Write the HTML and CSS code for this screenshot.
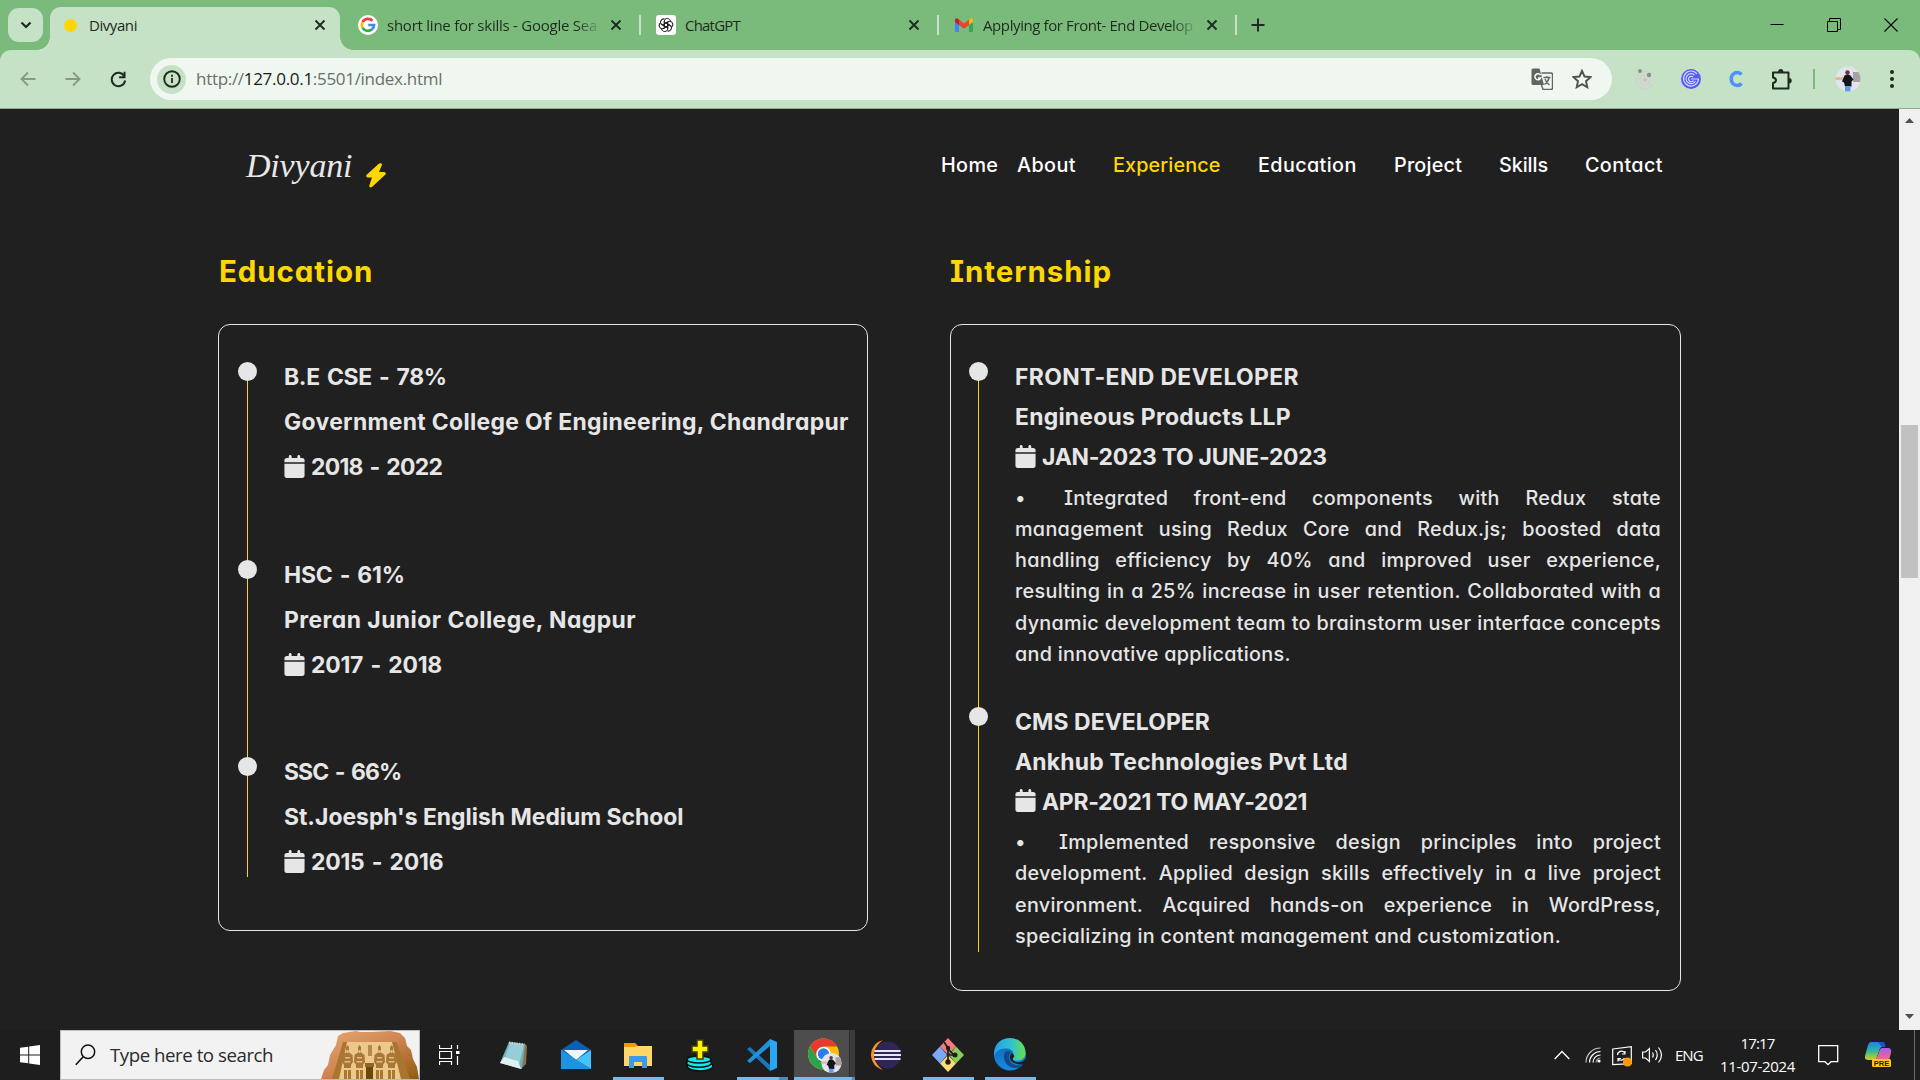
FILE: index.html
```
<!DOCTYPE html>
<html lang="en">
<head>
<meta charset="utf-8">
<title>Divyani</title>
<link rel="stylesheet" href="styles.css">
</head>
<body>
<svg class="defs" aria-hidden="true">
  <symbol id="close" viewBox="0 0 12 12"><path d="M1.5 1.5l9 9M10.5 1.5l-9 9" stroke="#1f2a20" stroke-width="1.9" fill="none"/></symbol>
  <symbol id="calendar" viewBox="0 0 448 512"><path fill="#e6e6e6" d="M96 32V64H48C21.500 64 0 85.500 0 112v48H448V112c0-26.500-21.500-48-48-48H352V32c0-17.700-14.300-32-32-32s-32 14.300-32 32V64H160V32c0-17.700-14.300-32-32-32S96 14.300 96 32zM448 192H0V464c0 26.500 21.500 48 48 48H400c26.500 0 48-21.500 48-48V192z"/></symbol>
  <symbol id="avatar" viewBox="0 0 26 26">
    <clipPath id="round"><circle cx="13" cy="13" r="12.500"/></clipPath>
    <g clip-path="url(#round)"><rect width="26" height="26" fill="#e3e3f0"/><path d="M0 11h10v3H0z" fill="#d9bf98"/><path d="M18 6h8v10h-8z" fill="#a9a0a6"/><circle cx="12.500" cy="6.500" r="2.200" fill="#5a3a33"/><path d="M9.500 9.500q3-2 6 0l3 4-2 2v5H10l-1-4-2-1z" fill="#12131c"/><path d="M10 20h5.500v6H10z" fill="#5f9bea"/></g>
  </symbol>
</svg>

<div class="screen">
  <header class="tabstrip">
    <div class="tab-search"><svg width="12" height="8" viewBox="0 0 12 8"><path d="M1.500 1.500L6 6l4.500-4.500" fill="none" stroke="#1f2a20" stroke-width="2.200"/></svg></div>
    <div class="tab active">
      <span class="fav"><i class="yellow-dot"></i></span><span class="tab-title t1">Divyani</span><svg class="x"><use href="#close"/></svg>
    </div>
    <div class="tab">
      <span class="fav"><svg width="20" height="20" viewBox="0 0 20 20"><circle cx="10" cy="10" r="10" fill="#fff"/><g fill="none" stroke-width="2.700"><path d="M14.500 5.800A6.200 6.200 0 0 0 4.600 7.100" stroke="#ea4335"/><path d="M4.600 7.100a6.300 6.300 0 0 0 0 5.800" stroke="#fbbc05"/><path d="M4.600 12.900a6.200 6.200 0 0 0 9.300 1.500" stroke="#34a853"/><path d="M13.900 14.400A6 6 0 0 0 16.100 10H10.300" stroke="#4285f4"/></g></svg></span><span class="tab-title fade t2">short line for skills - Google Sea</span><svg class="x"><use href="#close"/></svg>
    </div>
    <div class="tab">
      <span class="fav"><svg width="20" height="20" viewBox="0 0 20 20"><rect width="20" height="20" rx="3" fill="#fff"/><g fill="none" stroke="#222" stroke-width="1"><path id="petal" d="M8.300 12.700V6.500c0-4 5.500-4 6.200-.5M8.300 9l4.500-2.600"/><use href="#petal" transform="rotate(60 10 10)"/><use href="#petal" transform="rotate(120 10 10)"/><use href="#petal" transform="rotate(180 10 10)"/><use href="#petal" transform="rotate(240 10 10)"/><use href="#petal" transform="rotate(300 10 10)"/></g></svg></span><span class="tab-title t3">ChatGPT</span><svg class="x"><use href="#close"/></svg>
    </div>
    <div class="tab">
      <span class="fav"><svg width="18" height="14" viewBox="0 0 18 14"><path d="M0 2v11q0 1 1 1h3V5z" fill="#4285f4"/><path d="M18 2v11q0 1-1 1h-3V5z" fill="#34a853"/><path d="M14 1.500l2-1.200q2-.6 2 2V4l-4 3z" fill="#fbbc04"/><path d="M4 1.500L2 .3Q0-.3 0 2.300V4l4 3z" fill="#c5221f"/><path d="M4 1.500l5 4 5-4V7l-5 3.800L4 7z" fill="#ea4335"/></svg></span><span class="tab-title fade t4">Applying for Front- End Develop</span><svg class="x"><use href="#close"/></svg>
    </div>
    <svg class="plus" width="14" height="14" viewBox="0 0 14 14"><path d="M7 .5v13M.5 7h13" stroke="#1f2a20" stroke-width="2"/></svg>
    <div class="window-buttons">
      <svg width="14" height="14" viewBox="0 0 14 14"><path d="M.5 6.500h13" stroke="#000"/></svg>
      <svg width="14" height="14" viewBox="0 0 14 14"><path d="M.5 3.500h10v10H.5zM2.500 3V.5h11v11H11" fill="none" stroke="#000"/></svg>
      <svg width="14" height="14" viewBox="0 0 14 14"><path d="M.5.5l13 13M13.500.5l-13 13" stroke="#000" stroke-width="1.100"/></svg>
    </div>
  </header>

  <div class="toolbar">
    <div class="nav-buttons">
      <svg width="16" height="16" viewBox="0 0 16 16"><path d="M15.500 8H1.500M8 1.500L1.500 8 8 14.500" fill="none" stroke="#869a87" stroke-width="1.900"/></svg>
      <svg width="16" height="16" viewBox="0 0 16 16"><path d="M.5 8h14M8 1.500L14.500 8 8 14.500" fill="none" stroke="#869a87" stroke-width="1.900"/></svg>
      <svg width="17" height="17" viewBox="0 0 17 17"><path d="M14.300 5.200A6.700 6.700 0 1 0 15.100 9.500" fill="none" stroke="#1f2a20" stroke-width="2"/><path d="M15.500.8v6.400H9.100V5.300h4.500V.8z" fill="#1f2a20"/></svg>
    </div>
    <div class="omnibox">
      <span class="info"><svg width="18" height="18" viewBox="0 0 18 18"><circle cx="9" cy="9" r="7.800" fill="none" stroke="#1f2a20" stroke-width="1.900"/><path d="M9 8v5M9 4.800v1.900" stroke="#1f2a20" stroke-width="1.800"/></svg></span>
      <span class="url">http://<b>127.0.0.1</b>:5501/index.html</span>
      <svg width="22" height="22" viewBox="0 0 22 22"><path d="M2 .5h6.500L13 17H2Q.5 17 .5 15.500V2Q.5.500 2 .5z" fill="#5f6661"/><path d="M9.500 7.200A3 3 0 1 0 9.700 10H7" fill="none" stroke="#fff" stroke-width="1.500"/><path d="M10.500 5H20q1.500 0 1.500 1.500V20q0 1.500-1.500 1.500h-8L10.500 17" fill="none" stroke="#5f6661" stroke-width="1.400"/><path d="M12.500 9.500h7M16 8v1.500M18.200 9.500q-1 4.500-4.700 7M14 11q1 3.500 4.500 6" fill="none" stroke="#5f6661" stroke-width="1.300"/></svg>
      <svg class="star" width="20" height="20" viewBox="0 0 20 20"><path d="M10 1.800l2.500 5.700 6 .6-4.500 4.100 1.300 6L10 15.100l-5.300 3.100 1.300-6L1.500 8.100l6-.6z" fill="none" stroke="#4c534d" stroke-width="1.900"/></svg>
    </div>
    <div class="extensions">
      <svg width="22" height="22" viewBox="0 0 22 22"><g fill="none" stroke="#d3cfd0" stroke-width="1.500"><circle cx="11" cy="12" r="8.800" stroke-dasharray="44 12" stroke-dashoffset="-4"/><circle cx="11" cy="12" r="5"/></g><circle cx="11" cy="12" r="2" fill="#dcb6d0"/><circle cx="6" cy="3" r="2" fill="#8b8f8c"/><circle cx="15" cy="7" r="2.200" fill="#8b8f8c"/></svg>
      <svg width="20" height="20" viewBox="0 0 20 20"><circle cx="10" cy="10" r="10" fill="#525cf5"/><g fill="none" stroke="#d5d8ff" stroke-width="1.200"><path d="M16 5A7.500 7.500 0 1 0 17.500 10H10M13.500 6A5 5 0 1 0 14.500 12"/><path d="M12 8a2.700 2.700 0 1 0 .5 3.500"/></g></svg>
      <svg width="16" height="20" viewBox="0 0 16 20"><path d="M13.500 5.500A6 6.500 0 1 0 13.500 14.500" fill="none" stroke="#4b93fb" stroke-width="3.600"/></svg>
      <svg width="22" height="23" viewBox="0 0 22 23"><path d="M2 4.500h15.500v16H2V15q3-.5 3-2.700T2 9.500z" fill="none" stroke="#1f2a20" stroke-width="2" stroke-linejoin="round"/><path d="M7 4a2.700 3 0 0 1 5.400 0zM18 10a2.700 2.700 0 0 1 0 5.400z" fill="#1f2a20"/></svg>
    </div>
    <i class="bar"></i>
    <svg class="profile"><use href="#avatar"/></svg>
    <svg class="kebab" width="4" height="20" viewBox="0 0 4 20"><g fill="#1f2a20"><circle cx="2" cy="3" r="2"/><circle cx="2" cy="10" r="2"/><circle cx="2" cy="17" r="2"/></g></svg>
  </div>

  <div class="viewport">
    <div class="page">
      <nav class="site-nav">
        <div class="logo"><span class="signature">Divyani</span><svg width="20" height="25" viewBox="0 0 20 25"><path d="M14.500.3q2 .2 1.300 2L13 9h5.200q2.600.8 1 2.800L6.200 23.800q-2.700 1.600-3-.8L6 14.500H1.500q-2.200-.7-.8-2.800L12.800.8q.8-.6 1.700-.5z" fill="#ffd700"/></svg></div>
        <a class="n-home">Home</a><a class="n-about">About</a><a class="n-exp">Experience</a><a class="n-edu">Education</a><a class="n-proj">Project</a><a class="n-skills">Skills</a><a class="n-contact">Contact</a>
      </nav>
      <main class="columns">
        <section class="education">
          <h2 class="h-edu">Education</h2>
          <ul class="card">
            <li><h3 class="e1">B.E CSE - 78%</h3><h3 class="e2">Government College Of Engineering, Chandrapur</h3><h3 class="date"><svg><use href="#calendar"/></svg>2018 - 2022</h3></li>
            <li><h3 class="e3">HSC - 61%</h3><h3 class="e4">Preran Junior College, Nagpur</h3><h3 class="date d2"><svg><use href="#calendar"/></svg>2017 - 2018</h3></li>
            <li><h3 class="e5">SSC - 66%</h3><h3 class="e6">St.Joesph's English Medium School</h3><h3 class="date d2"><svg><use href="#calendar"/></svg>2015 - 2016</h3></li>
          </ul>
        </section>
        <section class="internship">
          <h2 class="h-int">Internship</h2>
          <ul class="card">
            <li>
              <h3 class="i1">FRONT-END DEVELOPER</h3><h3 class="i2">Engineous Products LLP</h3><h3 class="date"><svg><use href="#calendar"/></svg>JAN-2023 TO JUNE-2023</h3>
              <p><span><i class="bullet wide">•</i>Integrated front-end components with Redux state</span><span>management using Redux Core and Redux.js; boosted data</span><span>handling efficiency by 40% and improved user experience,</span><span>resulting in a 25% increase in user retention. Collaborated with a</span><span>dynamic development team to brainstorm user interface concepts</span><span>and innovative applications.</span></p>
            </li>
            <li>
              <h3 class="i3">CMS DEVELOPER</h3><h3 class="i4">Ankhub Technologies Pvt Ltd</h3><h3 class="date"><svg><use href="#calendar"/></svg>APR-2021 TO MAY-2021</h3>
              <p><span><i class="bullet">•</i>Implemented responsive design principles into project</span><span>development. Applied design skills effectively in a live project</span><span>environment. Acquired hands-on experience in WordPress,</span><span>specializing in content management and customization.</span></p>
            </li>
          </ul>
        </section>
      </main>
    </div>
    <div class="scrollbar">
      <svg width="9" height="5" viewBox="0 0 9 5"><path d="M0 5L4.500 0 9 5z" fill="#505050"/></svg>
      <i class="thumb"></i>
      <svg width="9" height="5" viewBox="0 0 9 5"><path d="M0 0l4.500 5L9 0z" fill="#505050"/></svg>
    </div>
  </div>

  <footer class="taskbar">
    <div class="start"><svg width="20" height="20" viewBox="0 0 20 20"><path d="M0 2.800L8.200 1.700v7.800H0zM9.200 1.500L20 0v9.500H9.200zM0 10.500h8.200v7.800L0 17.200zM9.200 10.500H20V20L9.200 18.500z" fill="#fff"/></svg></div>
    <div class="search">
      <svg width="21" height="22" viewBox="0 0 21 22"><circle cx="13" cy="7.800" r="6.700" fill="none" stroke="#111" stroke-width="1.500"/><path d="M8.200 12.800L.8 20.800" stroke="#111" stroke-width="1.600"/></svg>
      <span>Type here to search</span>
      <svg class="temple" width="98" height="48" viewBox="0 0 98 48">
        <defs><linearGradient id="rock" x2="1" y2="1"><stop offset="0" stop-color="#e8a873"/><stop offset=".5" stop-color="#cd8450"/><stop offset="1" stop-color="#8f5a10"/></linearGradient></defs>
        <path d="M0 48l3-9 4-5 2-10 6-10 2-9 5-3 13-2 4 1 12 0 18-1 10 2 5 5 2 8 4 4 2 9 4 8 2 12z" fill="url(#rock)"/>
        <path d="M22 11h54l12 37H12z" fill="#edc88b"/><path d="M22 11h4L18 48h-7zM71 11h5l13 37h-9z" fill="#a87630"/>
        <path d="M47 14h4v11h-4z" fill="#b58b4c"/><path d="M45 34h7v14h-7z" fill="#6b470d"/><path d="M44 32h9v4h-9z" fill="#8d642a"/>
        <g fill="#a97838"><path id="king" d="M26.500 14l1.500 2v3l-.5 2 4 3 .5 7-2 3v3h-7v-3l-2-3 .5-7 4-3-.5-2v-3zM23 39h3v9h-3zM27 39h3v9h-3z"/><use href="#king" x="12"/><use href="#king" x="32"/><use href="#king" x="44"/></g>
        <g id="light" fill="#e3bb7c"><path id="trim" d="M25.500 19h2v3h-2zM24 26h5v1.500h-5zM23.500 30h6v1.500h-6z"/><use href="#trim" x="12"/><use href="#trim" x="32"/><use href="#trim" x="44"/></g>
      </svg>
    </div>
    <div class="apps">
      <div class="app taskview"><svg width="21" height="20" viewBox="0 0 21 20"><path d="M.5 0v3.500h12V0M.5 20v-3.500h12V20M.5 6.500h12v7H.5zM18.500 0v4M18.500 11v9" fill="none" stroke="#fff" stroke-width="1.200"/><path d="M17 6h3.500v3H17z" fill="#fff"/></svg></div>
      <div class="app"><svg width="30" height="30" viewBox="0 0 30 30"><path d="M25 3l3 3-1 18-4 4z" fill="#8d7447"/><path d="M10 2l16 2-3 25-22-6z" fill="#6fb0c0"/><path d="M11 3l14 2-5 20-16-2z" fill="#a5d6df" opacity=".75"/><path d="M5 17l14 4 3 8-21-6z" fill="#dfeff2"/><path d="M10 2.500l15 2" stroke="#d9d9d9" stroke-width="2" stroke-dasharray="1.500 1"/></svg></div>
      <div class="app"><svg width="30" height="30" viewBox="0 0 30 30"><path d="M0 10L15 0l15 10v9H0z" fill="#0a60b4"/><path d="M3 10h24L15 20z" fill="#f4f4f4"/><path d="M0 10l15 10L0 29z" fill="#2da7ee"/><path d="M30 10v19L15 20z" fill="#46c3f8"/><path d="M0 10l30 19H0z" fill="#1e93e0"/></svg></div>
      <div class="app open"><svg width="28" height="28" viewBox="0 0 28 28"><path d="M0 2h11l3 3H0z" fill="#e6a100"/><path d="M0 5h28v20H0z" fill="#ffd767"/><path d="M0 2h11l2 3-2 1H0z" fill="#e6a100"/><path d="M5 27V16q0-1 1-1h16q1 0 1 1v11h-5v-6h-8v6z" fill="#4199e6"/></svg></div>
      <div class="app"><svg width="30" height="34" viewBox="0 0 30 34"><g fill="#19e5eb" stroke="#011" stroke-width="1.500"><ellipse cx="15" cy="28" rx="13" ry="5"/><ellipse cx="14" cy="25" rx="12.500" ry="4.300"/><ellipse cx="14" cy="21.500" rx="12" ry="3.500"/></g><path d="M12 2h6v6h5v6h-5v7h-6v-7H7V8h5z" fill="#fff200" stroke="#3f3b00" stroke-width="1.500"/></svg></div>
      <div class="app open multi"><svg width="30" height="32" viewBox="0 0 30 32"><path d="M0 10l3-2 20 18v6z" fill="#1878be"/><path d="M0 22l3 2L23 7V0z" fill="#2391d9"/><path d="M23 0l7 3v26l-7 3z" fill="#2ba6f2"/></svg></div>
      <div class="app open current"><svg width="34" height="36" viewBox="0 0 34 36"><circle cx="15.500" cy="16" r="15.500" fill="#fbbc05"/><path d="M2.100 8.300A15.500 15.500 0 0 1 29 8.500H15.500L9 19.800z" fill="#e33b2e"/><path d="M2.100 8.300A15.500 15.500 0 0 0 15.500 31.500L22 19.800H9z" fill="#2ba24c"/><circle cx="15.500" cy="16" r="7.300" fill="#fff"/><circle cx="15.500" cy="16" r="5.700" fill="#2d7de9"/><use href="#avatar" x="13" y="14" width="21" height="22"/></svg></div>
      <div class="app"><svg width="30" height="30" viewBox="0 0 30 30"><path d="M12 .3A15 15 0 0 0 12 29.700 17 17 0 0 1 12 .3z" fill="#f7941e"/><circle cx="16.500" cy="15" r="13.500" fill="#2f2558"/><path d="M3.500 11h26M3 15h27M3.500 19h26" stroke="#e9e6f4" stroke-width="2.100"/></svg></div>
      <div class="app open"><svg width="32" height="34" viewBox="0 0 32 34"><path d="M16 0l8 8.500-8 8.500-8-8.500z" fill="#f37c7c"/><path d="M8 8.500L15 17 8 25.500 0 17z" fill="#7daaf8"/><path d="M24 8.500L32 17l-8 8.500-7-8.500z" fill="#8acb5c"/><path d="M16 17l8 8.500-8 8.500-8-8.500z" fill="#fbdc77"/><path d="M12 4l4 6v14M16 17h7M16 11l6 6" fill="none" stroke="#1e1e1e" stroke-width="1.700"/><circle cx="16" cy="10" r="2.200" fill="#1e1e1e"/><circle cx="16" cy="24" r="2.700" fill="#1e1e1e"/><circle cx="23" cy="17" r="2.500" fill="#1e1e1e"/></svg></div>
      <div class="app open"><svg width="32" height="33" viewBox="0 0 32 33"><defs><linearGradient id="wave"><stop offset="0" stop-color="#1f9fe8"/><stop offset=".55" stop-color="#2fc3cf"/><stop offset="1" stop-color="#6ade4b"/></linearGradient><linearGradient id="deep" x2="0" y2="1"><stop offset="0" stop-color="#0f62b5"/><stop offset="1" stop-color="#178be0"/></linearGradient></defs><circle cx="16" cy="16.500" r="16" fill="url(#deep)"/><path d="M0 15C1-5 31-5 31.500 15c0 6-6 9-11.500 7-3-1-2-3-1-4 2-5-3-8-8-7.500C5 11 1 14 0 19z" fill="url(#wave)"/><path d="M11 14c-3 5 0 16 11 16 4 0 6-1.500 8-4-6 3-15 1-15-7 0-2 1-4 2-5q-3-2-6 0z" fill="#114a8c"/><path d="M18 15q4 3 1 5-1 3 3 4 6 1 9-3l2 2-2 3q-3 1-8 0-8-2-7-8 .5-2 2-3z" fill="#1e1e1e"/></svg></div>
    </div>
    <div class="tray">
      <svg class="chev" width="16" height="10" viewBox="0 0 16 10"><path d="M.7 9L8 1.500 15.300 9" fill="none" stroke="#fff" stroke-width="1.300"/></svg>
      <svg class="wifi" width="17" height="16" viewBox="0 0 17 16"><g fill="none" stroke="#fff" stroke-width="1.200"><path d="M1 15.500A14.500 14.500 0 0 1 15.500 1" opacity=".75"/><path d="M4.500 15.500a11 11 0 0 1 11-11M8 15.500A7.500 7.500 0 0 1 15.500 8"/><path d="M11 15.500a4.500 4.500 0 0 1 4.500-4.500" opacity=".6"/></g><circle cx="14" cy="14" r="1.600" fill="#fff"/></svg>
      <svg class="upd" width="21" height="21" viewBox="0 0 21 21"><path d="M.7 3l18.600-2.300v17L.7 18.500z" fill="none" stroke="#fff" stroke-width="1.200"/><path d="M5.500 9a4 4 0 0 1 7-2.500M13 5v3h-3M12.500 12a4 4 0 0 1-6.500 1M6 15.500v-3h3" fill="none" stroke="#fff" stroke-width="1.200"/><circle cx="15.500" cy="16" r="4.500" fill="#ff9800"/></svg>
      <svg class="vol" width="21" height="18" viewBox="0 0 21 18"><path d="M.6 6h3L7.400 2.500v13L3.600 12h-3z" fill="none" stroke="#fff" stroke-width="1.200"/><path d="M10.500 6.500q1.500 2.500 0 5M13.500 4q3.500 5 0 10M16.500 1.500q6 7.500 0 15" fill="none" stroke="#fff" stroke-width="1.200"/></svg>
      <span class="lang">ENG</span>
      <div class="clock"><span class="time">17:17</span><span class="day">11-07-2024</span></div>
      <svg class="note" width="21" height="21" viewBox="0 0 21 21"><path d="M.7.7h19v16H13l-3 3-3-3H.7z" fill="none" stroke="#fff" stroke-width="1.300"/></svg>
      <svg class="copilot" width="27" height="26" viewBox="0 0 27 26"><defs><linearGradient id="ca" x2="0" y2="1"><stop offset="0" stop-color="#1c7ff0"/><stop offset=".5" stop-color="#2fb89c"/><stop offset="1" stop-color="#d7cf1d"/></linearGradient><linearGradient id="cb" x2="0" y2="1"><stop offset="0" stop-color="#a85df0"/><stop offset="1" stop-color="#f5697b"/></linearGradient></defs><path d="M6 0h11q3 0 3 5h-3q-2 0-3 4l-3 9H3q-4 0-3-4L3 3q1-3 3-3z" fill="url(#ca)"/><path d="M17 6h7q3 1 2 5l-2 7H11l3-8q1-4 3-4z" fill="url(#cb)"/><path d="M13 0h4q3 0 3.500 5H17z" fill="#1458c8"/><rect x="7" y="17" width="19" height="8" rx="1.500" fill="#ffc81a"/><text x="16.500" y="23.500" text-anchor="middle" class="pre">PRE</text></svg>
      <i class="peek"></i>
    </div>
  </footer>
</div>
</body>
</html>
```
FILE: styles.css
```
* { box-sizing: border-box; }
body { margin: 0; background: #202020; overflow: hidden; }
ul, p, h2, h3 { margin: 0; padding: 0; list-style: none; }
svg { display: block; flex: none; }
.defs { position: absolute; width: 0; height: 0; }
.screen { width: 1920px; height: 1080px; display: flex; flex-direction: column; background: #7abb7c; font-family: "Open Sans", "Liberation Sans", sans-serif; color: #1f2a20; }

/* tab strip */
.tabstrip { height: 50px; flex: none; display: flex; align-items: center; font-size: 15px; }
.tab-search { width: 35px; height: 34px; margin: 0 7px 0 8px; border-radius: 11px; background: #c5e1c6; display: flex; align-items: center; justify-content: center; }
.tab { width: 298px; height: 20px; padding: 0 17px 0 15px; display: flex; align-items: center; border-right: 2px solid #c5e1c6; }
.tab.active { position: relative; width: 290px; height: 43px; margin: 7px 3px 0 0; padding: 0 14px 7px 10px; background: #c5e1c6; border: 0; border-radius: 11px 11px 0 0; }
.tab.active::before, .tab.active::after { content: ""; position: absolute; bottom: 0; width: 13px; height: 13px; }
.tab.active::before { left: -13px; background: radial-gradient(circle at 0 0, transparent 12.5px, #c5e1c6 13px); }
.tab.active::after { right: -13px; background: radial-gradient(circle at 100% 0, transparent 12.5px, #c5e1c6 13px); }
.fav { width: 20px; display: flex; justify-content: center; margin-right: 9px; }
.yellow-dot { width: 13px; height: 13px; border-radius: 50%; background: #ffd700; }
.tab-title { flex: 1; min-width: 0; height: 20px; line-height: 20px; margin-right: 8px; white-space: nowrap; }
.fade { -webkit-mask-image: linear-gradient(90deg, #000 88%, transparent 100%); mask-image: linear-gradient(90deg, #000 88%, transparent 100%); }
.t1 { letter-spacing: -.43px; }
.t2 { letter-spacing: -.24px; }
.t3 { letter-spacing: -.79px; }
.t4 { letter-spacing: -.4px; }
.x { width: 12px; height: 12px; }
.plus { margin-left: 14px; }
.window-buttons { flex: 1; display: flex; justify-content: flex-end; gap: 43px; padding-right: 22px; }

/* toolbar */
.toolbar { height: 59px; flex: none; display: flex; align-items: center; background: #c5e1c6; border-bottom: 1px solid #92a893; border-radius: 11px 11px 0 0; }
.nav-buttons { width: 150px; display: flex; gap: 29px; padding-left: 20px; align-items: center; }
.omnibox { width: 1462px; height: 42px; border-radius: 21px; background: #f0f7f1; display: flex; align-items: center; padding: 0 20px 0 7px; }
.info { width: 29px; height: 29px; border-radius: 50%; background: #c5e1c6; display: flex; align-items: center; justify-content: center; }
.url { flex: 1; margin-left: 10px; font-size: 17px; letter-spacing: -.3px; color: #67706a; line-height: 24px; }
.url b { font-weight: 400; color: #151c16; }
.star { margin-left: 19px; }
.extensions { display: flex; align-items: center; gap: 25px; margin-left: 22px; }
.extensions svg:nth-child(n+3) { margin-left: 2px; }
.bar { width: 2px; height: 20px; background: #7abb7c; margin-left: 20px; }
.profile { width: 26px; height: 26px; margin-left: 20px; }
.kebab { margin-left: 29px; }

/* page */
.viewport { height: 921px; flex: none; display: flex; background: #202020; }
.page { flex: 1; font-family: Inter, "Liberation Sans", sans-serif; font-feature-settings: "cv11"; }
.scrollbar { width: 21px; background: #f0f0f0; display: flex; flex-direction: column; align-items: center; padding: 9px 0; }
.thumb { width: 17px; height: 153px; background: #c1c1c1; margin: 302px 0 436px; }
.site-nav { height: 113px; display: flex; padding: 43px 0 0 246px; font-size: 19.8px; font-weight: 500; line-height: 26px; color: #fff; white-space: nowrap; }
.logo { width: 695px; display: flex; gap: 14px; margin-top: -12px; }
.logo svg { margin-top: 23px; }
.signature { width: 106px; font: italic 34px/52px "Liberation Serif", serif; letter-spacing: -.2px; color: #e8e8e8; }
.n-home { width: 76px; letter-spacing: .35px; }
.n-about { width: 96px; letter-spacing: .42px; }
.n-exp { width: 145px; letter-spacing: .12px; color: #ffd700; }
.n-edu { width: 136px; letter-spacing: .38px; }
.n-proj { width: 105px; letter-spacing: .2px; }
.n-skills { width: 86px; letter-spacing: -.07px; }
.n-contact { letter-spacing: .36px; }
.columns { display: flex; gap: 82px; padding-left: 218px; align-items: flex-start; }
.education { width: 650px; }
.internship { width: 731px; }
h2 { height: 102px; padding-top: 28px; font-size: 29.5px; line-height: 42px; font-weight: 700; color: #ffd700; }
.h-edu { padding-left: 1px; letter-spacing: .9px; }
.h-int { letter-spacing: .95px; font-feature-settings: "cv11", "cv08"; }
.card { position: relative; border: 1px solid #e6e6e6; border-radius: 12px; padding: 30px 19px 0 65px; height: 607px; color: #e6e6e6; }
.internship .card { height: 667px; padding: 32px 19px 0 64px; }
.card::before { content: ""; position: absolute; left: 28px; top: 40px; width: 1px; height: 512px; background: #ffd700; }
.internship .card::before { left: 27px; height: 587px; }
.card li { position: relative; height: 197.5px; }
.internship li { height: 344.7px; }
.card li::before { content: ""; position: absolute; left: -46px; top: 7px; width: 19px; height: 19px; border-radius: 50%; background: #e6e6e6; }
.internship li::before { top: 5px; }
h3 { display: flex; align-items: center; font-size: 22.9px; font-weight: 700; line-height: 45px; white-space: nowrap; }
.internship h3 { line-height: 40px; }
h3 svg { width: 21px; height: 23px; margin: 0 6px 2px 0; }
.e1 { word-spacing: 2px; letter-spacing: -.3px; }
.e2 { letter-spacing: .34px; }
.education .date { word-spacing: 2px; letter-spacing: -.7px; }
.education .d2 { letter-spacing: -.2px; }
.e3 { word-spacing: 2px; letter-spacing: -.2px; }
.e4 { letter-spacing: .46px; }
.e5 { word-spacing: 2px; letter-spacing: -.9px; }
.i1 { letter-spacing: .38px; }
.i2 { letter-spacing: .26px; }
.i3 { letter-spacing: .09px; }
.i4 { letter-spacing: .23px; }
.internship .date { letter-spacing: -.27px; }
.internship p { margin-top: 5.5px; width: 646px; font-size: 19.8px; font-weight: 450; line-height: 31.3px; letter-spacing: .3px; font-feature-settings: "cv11", "cv08"; }
p span { display: block; text-align: justify; text-align-last: justify; }
p span:last-child { text-align-last: left; }
.bullet { display: inline-block; width: 44px; font-style: normal; text-align-last: left; }
.bullet.wide { width: 49px; }

/* taskbar */
.taskbar { height: 50px; flex: none; display: flex; background: #1e1e1e; color: #fff; }
.start { width: 60px; padding: 15px 0 0 20px; }
.search { width: 360px; background: #f2f2f2; border: 1px solid #bcbcbc; display: flex; align-items: center; padding-left: 14px; color: #2b2b2b; font-size: 18.7px; letter-spacing: -.47px; }
.search span { flex: 1; margin-left: 14px; line-height: 26px; }
.temple { align-self: flex-end; }
.apps { display: flex; padding-left: 2px; }
.app { width: 62px; height: 50px; display: flex; align-items: center; justify-content: center; border-bottom: 3px solid transparent; padding-top: 2px; }
.app.taskview { width: 61px; justify-content: flex-start; padding-left: 17px; }
.app.open { width: 51px; margin: 0 5.5px; border-color: #76b9ed; }
.app.multi { border-image: linear-gradient(90deg, #76b9ed 78%, #5987ae 78%) 3; }
.app.current { width: 61px; margin: 0 0 0 1px; padding-top: 4px; background: linear-gradient(90deg, #4d4d4d 55px, #2c2c2c 55px, #2c2c2c 56px, #3b3b3b 56px); border-image: linear-gradient(90deg, #76b9ed 91%, #5987ae 91%) 3; }
.tray { margin-left: auto; width: 366px; display: flex; align-items: center; font-size: 15px; }
.wifi { margin-left: 15px; }
.upd { margin: 2px 0 0 10px; }
.vol { margin-left: 9px; }
.lang { width: 27px; margin-left: 12px; letter-spacing: -1px; }
.clock { width: 77px; margin-left: 17px; display: flex; flex-direction: column; align-items: center; line-height: 23px; }
.time { letter-spacing: -.85px; }
.day { letter-spacing: -.33px; white-space: nowrap; }
.note { margin-left: 22px; }
.copilot { margin-left: 26px; }
.pre { font: 700 7.500px "Liberation Sans", sans-serif; fill: #222; }
.peek { width: 1px; height: 50px; background: #6b6b6b; margin-left: auto; margin-right: 5px; }
```
